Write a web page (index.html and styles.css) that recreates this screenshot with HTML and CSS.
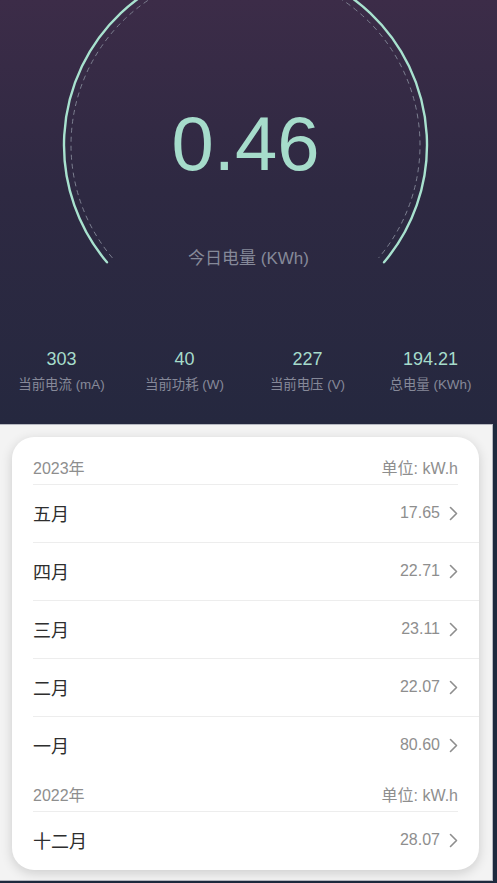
FILE: index.html
```html
<!DOCTYPE html>
<html lang="zh">
<head>
<meta charset="utf-8">
<title>电量</title>
<link rel="stylesheet" href="styles.css">
</head>
<body>
<header class="hero">
  <div class="gauge">
    <svg class="gauge-svg" width="497" height="300" viewBox="0 0 497 300">
      <path d="M107 262.3 A181.5 181.5 0 1 1 384 262.3" fill="none" stroke="#a8e2cf" stroke-width="2.4" stroke-linecap="round"/>
      <path d="M112.4 257.9 A174.5 174.5 0 1 1 378.6 257.9" fill="none" stroke="#7c7f90" stroke-width="1" stroke-dasharray="5 4"/>
    </svg>
    <div class="gauge-value">0.46</div>
    <div class="gauge-label">今日电量 (KWh)</div>
  </div>
  <div class="stats">
    <div class="stat"><div class="stat-num">303</div><div class="stat-label">当前电流 (mA)</div></div>
    <div class="stat"><div class="stat-num">40</div><div class="stat-label">当前功耗 (W)</div></div>
    <div class="stat"><div class="stat-num">227</div><div class="stat-label">当前电压 (V)</div></div>
    <div class="stat"><div class="stat-num">194.21</div><div class="stat-label">总电量 (KWh)</div></div>
  </div>
</header>
<main class="panel">
  <section class="card">
    <div class="group-head"><span>2023年</span><span>单位: kW.h</span></div>
    <div class="row"><span class="month">五月</span><span class="val">17.65<svg class="chev" width="9" height="15" viewBox="0 0 9 15"><path d="M1.5 1.5L7.5 7.5L1.5 13.5" fill="none" stroke="#8e8e8e" stroke-width="1.6" stroke-linecap="round" stroke-linejoin="round"/></svg></span></div>
    <div class="row"><span class="month">四月</span><span class="val">22.71<svg class="chev" width="9" height="15" viewBox="0 0 9 15"><path d="M1.5 1.5L7.5 7.5L1.5 13.5" fill="none" stroke="#8e8e8e" stroke-width="1.6" stroke-linecap="round" stroke-linejoin="round"/></svg></span></div>
    <div class="row"><span class="month">三月</span><span class="val">23.11<svg class="chev" width="9" height="15" viewBox="0 0 9 15"><path d="M1.5 1.5L7.5 7.5L1.5 13.5" fill="none" stroke="#8e8e8e" stroke-width="1.6" stroke-linecap="round" stroke-linejoin="round"/></svg></span></div>
    <div class="row"><span class="month">二月</span><span class="val">22.07<svg class="chev" width="9" height="15" viewBox="0 0 9 15"><path d="M1.5 1.5L7.5 7.5L1.5 13.5" fill="none" stroke="#8e8e8e" stroke-width="1.6" stroke-linecap="round" stroke-linejoin="round"/></svg></span></div>
    <div class="row last"><span class="month">一月</span><span class="val">80.60<svg class="chev" width="9" height="15" viewBox="0 0 9 15"><path d="M1.5 1.5L7.5 7.5L1.5 13.5" fill="none" stroke="#8e8e8e" stroke-width="1.6" stroke-linecap="round" stroke-linejoin="round"/></svg></span></div>
    <div class="group-head"><span>2022年</span><span>单位: kW.h</span></div>
    <div class="row last"><span class="month">十二月</span><span class="val">28.07<svg class="chev" width="9" height="15" viewBox="0 0 9 15"><path d="M1.5 1.5L7.5 7.5L1.5 13.5" fill="none" stroke="#8e8e8e" stroke-width="1.6" stroke-linecap="round" stroke-linejoin="round"/></svg></span></div>
  </section>
</main>
</body>
</html>
```
FILE: styles.css
```css
html, body {
  margin: 0;
  padding: 0;
}
body {
  background: #1e2a3e;
  font-family: "Liberation Sans", "Noto Sans CJK SC", sans-serif;
  width: 497px;
  height: 883px;
  overflow: hidden;
}
.hero {
  height: 424px;
  background: linear-gradient(180deg, #3c2c48 0%, #2e2942 45%, #25283f 100%);
  overflow: hidden;
}
.gauge {
  position: relative;
  height: 300px;
}
.gauge-svg {
  display: block;
}
.gauge-value {
  position: absolute;
  left: 0;
  right: 0;
  top: 106px;
  text-align: center;
  font-size: 76px;
  line-height: 76px;
  color: #a6dccb;
  padding-right: 6px;
}
.gauge-label {
  position: absolute;
  left: 0;
  right: 0;
  top: 248px;
  text-align: center;
  font-size: 17px;
  line-height: 22px;
  color: #868999;
}
.stats {
  display: grid;
  grid-template-columns: repeat(4, 1fr);
  width: 492px;
  margin-top: 48px;
}
.stat {
  display: flex;
  flex-direction: column;
  align-items: center;
}
.stat-num {
  font-size: 18px;
  line-height: 22px;
  color: #a6dccb;
}
.stat-label {
  margin-top: 6px;
  font-size: 13.4px;
  line-height: 18px;
  color: #868999;
}
.panel {
  width: 467px;
  background: #f3f3f3;
  border-top: 1px solid #b6b8c0;
  border-right: 1px solid #b6b8c0;
  border-bottom: 1px solid #b6b8c0;
  padding: 12px 13px 10px 12px;
}
.card {
  background: #ffffff;
  border-radius: 22px;
  box-shadow: 0 3px 12px rgba(0, 0, 0, 0.16);
  padding-top: 11px;
  overflow: hidden;
}
.group-head {
  display: flex;
  justify-content: space-between;
  align-items: center;
  height: 35px;
  padding-top: 1px;
  margin: 0 21px;
  border-bottom: 1px solid #ededed;
  font-size: 16px;
  color: #8e8e8e;
}
.row {
  display: flex;
  justify-content: space-between;
  align-items: center;
  height: 56px;
  padding-bottom: 1px;
  margin-left: 21px;
  padding-right: 21px;
  border-bottom: 1px solid #ededed;
}
.row.last {
  border-bottom: 1px solid transparent;
}
.month {
  font-size: 18px;
  color: #2e2e2e;
}
.val {
  display: flex;
  align-items: center;
  gap: 9px;
  font-size: 16px;
  color: #8e8e8e;
}
.chev {
  display: block;
}
```
